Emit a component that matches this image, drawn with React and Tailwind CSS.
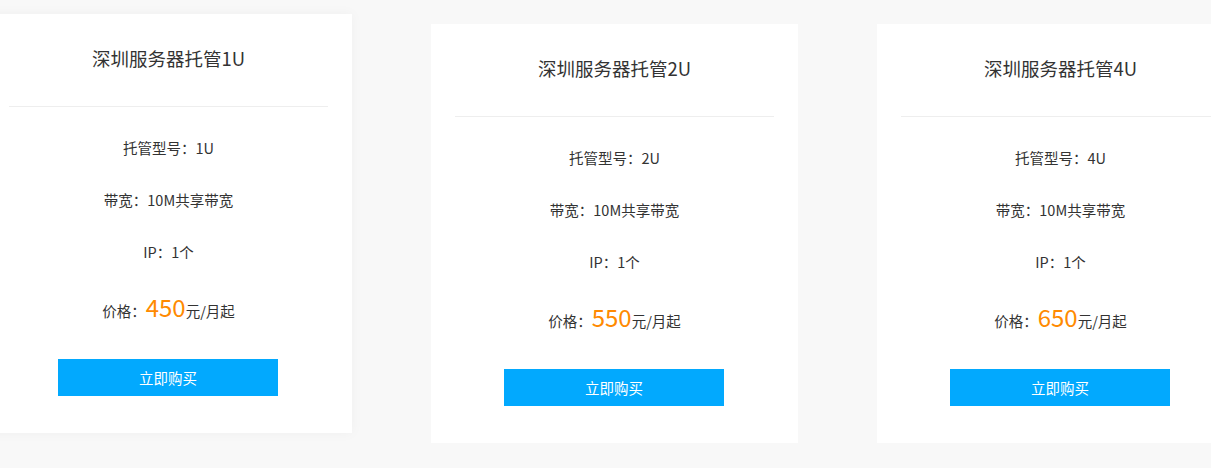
export default function App() {
  const cards = [
    { u: "1U", price: "450", lifted: true },
    { u: "2U", price: "550", lifted: false },
    { u: "4U", price: "650", lifted: false },
  ];
  return (
    <div
      className="w-[1211px] h-[468px] overflow-hidden bg-[#f8f8f8]"
      style={{ fontFamily: '"Noto Sans CJK SC", "Noto Sans", sans-serif' }}
    >
      <div className="flex items-start gap-[79px] ml-[-15px]">
        {cards.map((c) => (
          <div
            key={c.u}
            className={
              c.lifted
                ? "shrink-0 w-[367px] h-[419px] bg-white px-6 mt-[14px] shadow-[0_0_12px_rgba(0,0,0,0.04)]"
                : "shrink-0 w-[367px] h-[419px] bg-white px-6 mt-[24px]"
            }
          >
            <div className="h-[93px] border-b border-[#eeeeee] flex items-center justify-center pb-[4px]">
              <span className="text-[18.5px] leading-[28px] text-[#333333]">深圳服务器托管{c.u}</span>
            </div>
            <div className="pt-[15px] text-[14.5px] text-[#333333]">
              <div className="h-[52px] flex items-center justify-center">托管型号：{c.u}</div>
              <div className="h-[52px] flex items-center justify-center">带宽：10M共享带宽</div>
              <div className="h-[51px] flex items-center justify-center">IP：1个</div>
              <div className="h-[60px] flex items-center justify-center">
                <span className="flex items-baseline">
                  <span>价格：</span>
                  <span className="text-[24px] leading-[30px] text-[#ff8a00]">{c.price}</span>
                  <span>元/月起</span>
                </span>
              </div>
            </div>
            <div className="flex pl-[49px] pt-[22px]">
              <button className="w-[220px] h-[37px] bg-[#02a9fe] text-white text-[14.5px] flex items-center justify-center">
                立即购买
              </button>
            </div>
          </div>
        ))}
      </div>
    </div>
  );
}
